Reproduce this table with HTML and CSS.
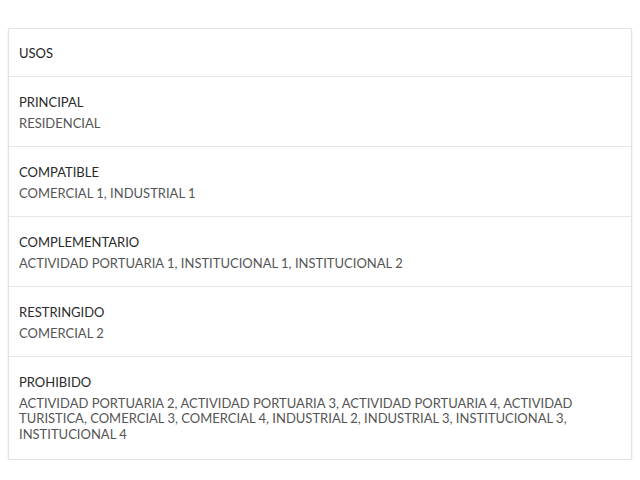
FILE: index.html
```html
<!DOCTYPE html>
<html lang="es">
<head>
<meta charset="utf-8">
<title>Usos</title>
<link rel="stylesheet" href="styles.css">
</head>
<body>
<section class="card">
  <header class="card-header">USOS</header>
  <div class="row">
    <div class="label">PRINCIPAL</div>
    <div class="value">RESIDENCIAL</div>
  </div>
  <div class="row">
    <div class="label">COMPATIBLE</div>
    <div class="value">COMERCIAL 1, INDUSTRIAL 1</div>
  </div>
  <div class="row">
    <div class="label">COMPLEMENTARIO</div>
    <div class="value">ACTIVIDAD PORTUARIA 1, INSTITUCIONAL 1, INSTITUCIONAL 2</div>
  </div>
  <div class="row">
    <div class="label">RESTRINGIDO</div>
    <div class="value">COMERCIAL 2</div>
  </div>
  <div class="row">
    <div class="label">PROHIBIDO</div>
    <div class="value">ACTIVIDAD PORTUARIA 2, ACTIVIDAD PORTUARIA 3, ACTIVIDAD PORTUARIA 4, ACTIVIDAD TURISTICA, COMERCIAL 3, COMERCIAL 4, INDUSTRIAL 2, INDUSTRIAL 3, INSTITUCIONAL 3, INSTITUCIONAL 4</div>
  </div>
</section>
</body>
</html>
```
FILE: styles.css
```css
html, body {
  margin: 0;
  padding: 0;
  background: #ffffff;
}
body {
  padding: 28px 8px 0 8px;
  font-family: Lato, "Open Sans", sans-serif;
  font-size: 13px;
}
.card {
  width: 622px;
  border: 1px solid #e2e2e2;
  border-radius: 2px;
  background: #fff;
  box-shadow: 0 1px 2px rgba(0,0,0,0.12);
}
.card-header {
  padding: 14px 10px 13px 10px;
  line-height: 20px;
  color: #222;
  border-bottom: 1px solid #e6e6e6;
}
.row {
  padding: 15px 10px 15px 10px;
  border-bottom: 1px solid #e6e6e6;
}
.row:last-child {
  border-bottom: none;
  padding-bottom: 17px;
}
.label {
  line-height: 20px;
  color: #2a2a2a;
}
.value {
  margin-top: 3.5px;
  line-height: 15.5px;
  color: #555;
  padding-right: 40px;
}
```
